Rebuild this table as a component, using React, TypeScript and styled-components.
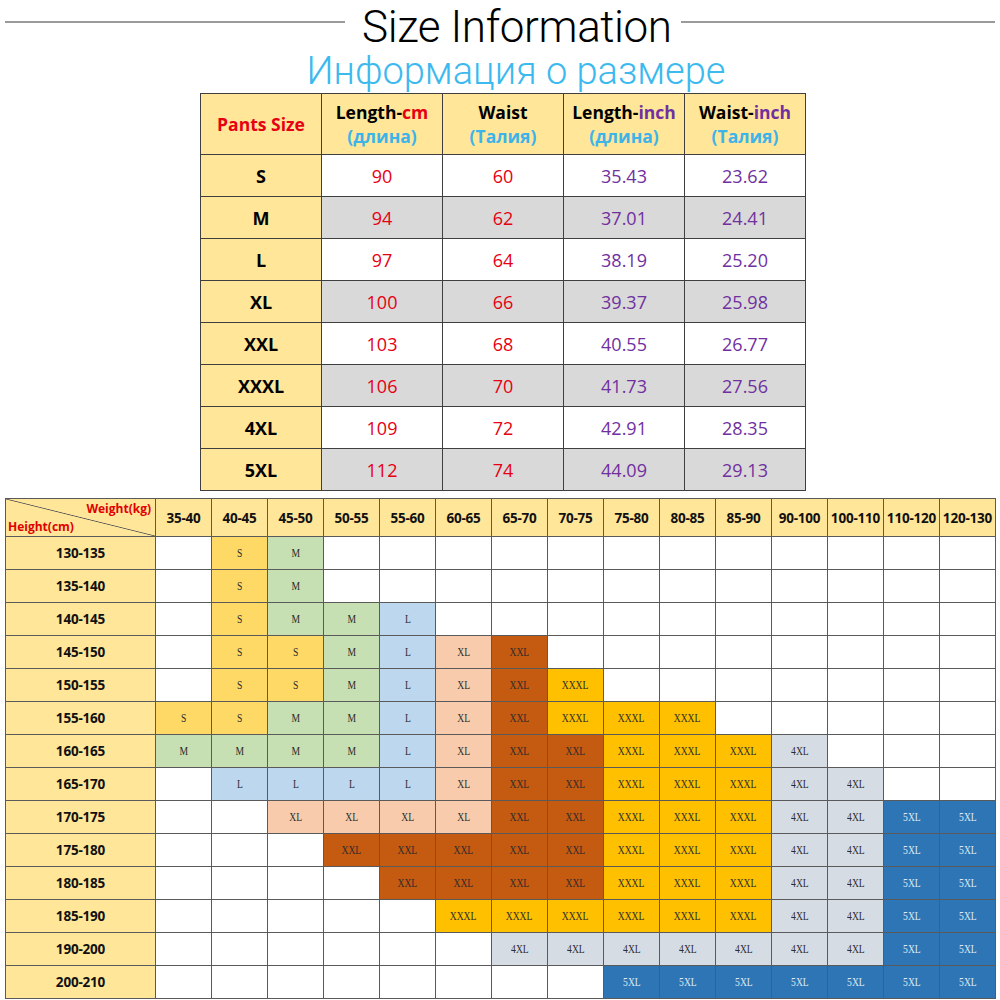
import React from "react";
import styled, { createGlobalStyle } from "styled-components";

const Global = createGlobalStyle`
  html, body { margin: 0; padding: 0; background: #fff; }
  body { font-family: "Open Sans", "Noto Sans", sans-serif; }
`;

const Page = styled.div`
  width: 1000px;
  height: 1000px;
  overflow: hidden;
  background: #fff;
  display: flex;
  flex-direction: column;
`;

const TitleRow = styled.div`
  height: 50px;
  display: flex;
  align-items: flex-start;
  padding: 0 5px;
`;

const Rule = styled.div<{ $fixed?: boolean }>`
  flex: ${(p) => (p.$fixed ? "0 0 340px" : "1")};
  height: 2px;
  margin-top: 21px;
  background: #9a9a9a;
`;

const Title = styled.h1`
  margin: 0 9px 0 17px;
  padding-top: 4px;
  font-family: Roboto, "Open Sans", sans-serif;
  font-weight: 300;
  font-size: 44px;
  line-height: 46px;
  color: #000;
  letter-spacing: -0.4px;
  white-space: nowrap;
`;

const Subtitle = styled.h2`
  margin: 0;
  height: 43px;
  text-align: center;
  font-family: Roboto, "Open Sans", sans-serif;
  font-weight: 300;
  font-size: 38px;
  line-height: 42px;
  color: #3cb9ef;
  padding-left: 32px;
  white-space: nowrap;
`;

const TopWrap = styled.div`
  padding-left: 200px;
`;

const TopGrid = styled.div`
  display: grid;
  width: max-content;
  grid-template-columns: repeat(5, 120px);
  grid-template-rows: 60px repeat(8, 41px);
  gap: 1px;
  padding: 1px;
  background: #3f3f3f;
`;

const TopCell = styled.div<{ $bg: string }>`
  background: ${(p) => p.$bg};
  display: flex;
  flex-direction: column;
  align-items: center;
  justify-content: center;
  font-size: 18px;
  line-height: 24px;
`;

const Head = styled.span<{ $color?: string }>`
  font-weight: 700;
  font-size: 17.5px;
  color: ${(p) => p.$color || "#000"};
`;

const Accent = styled.span<{ $color: string }>`
  color: ${(p) => p.$color};
`;

const SizeText = styled.span`
  font-weight: 700;
  font-size: 18px;
  color: #000;
`;

const Num = styled.span<{ $color: string }>`
  font-size: 18px;
  color: ${(p) => p.$color};
`;

const BottomWrap = styled.div`
  padding-left: 5px;
  margin-top: 7px;
`;

const ChartGrid = styled.div`
  display: grid;
  width: max-content;
  grid-template-columns: 149px repeat(15, 55px);
  grid-template-rows: 37px repeat(14, 32px);
  gap: 1px;
  padding: 1px;
  background: #5a5a5a;
`;

const HeadCell = styled.div`
  background: #ffe699;
  display: flex;
  align-items: center;
  justify-content: center;
  font-weight: 700;
  font-size: 13.5px;
  color: #111;
  white-space: nowrap;
  letter-spacing: -0.2px;
`;

const Corner = styled.div`
  position: relative;
  background: linear-gradient(
      to top right,
      transparent calc(50% - 0.8px),
      #555 50%,
      transparent calc(50% + 0.8px)
    ),
    #ffe699;
  font-weight: 700;
  font-size: 12px;
  color: #e00000;
`;

const CornerTop = styled.span`
  position: absolute;
  right: 4px;
  top: 1px;
`;

const CornerBottom = styled.span`
  position: absolute;
  left: 2px;
  bottom: 1px;
`;

const SIZE_BG: Record<string, string> = {
  S: "#ffd966",
  M: "#c6e0b4",
  L: "#bdd7ee",
  XL: "#f8cbad",
  XXL: "#c55a11",
  XXXL: "#ffc000",
  "4XL": "#d6dce4",
  "5XL": "#2e75b6",
};

const SizeCell = styled.div<{ $size: string }>`
  background: ${(p) => (p.$size ? SIZE_BG[p.$size] : "#fff")};
  display: flex;
  align-items: center;
  justify-content: center;
`;

const CellLabel = styled.span<{ $light: boolean }>`
  display: inline-block;
  font-family: "Liberation Serif", "DejaVu Serif", serif;
  font-size: 13px;
  transform: scaleX(0.74);
  color: ${(p) => (p.$light ? "#ddebf7" : "#2b2b2b")};
`;

const topRows = [
  ["S", "90", "60", "35.43", "23.62"],
  ["M", "94", "62", "37.01", "24.41"],
  ["L", "97", "64", "38.19", "25.20"],
  ["XL", "100", "66", "39.37", "25.98"],
  ["XXL", "103", "68", "40.55", "26.77"],
  ["XXXL", "106", "70", "41.73", "27.56"],
  ["4XL", "109", "72", "42.91", "28.35"],
  ["5XL", "112", "74", "44.09", "29.13"],
];

const weights = [
  "35-40", "40-45", "45-50", "50-55", "55-60", "60-65", "65-70", "70-75",
  "75-80", "80-85", "85-90", "90-100", "100-110", "110-120", "120-130",
];

const heights = [
  "130-135", "135-140", "140-145", "145-150", "150-155", "155-160", "160-165",
  "165-170", "170-175", "175-180", "180-185", "185-190", "190-200", "200-210",
];

const rep = (s: string, n: number) => Array.from({ length: n }, () => s);

const chart: [number, string[]][] = [
  [1, ["S", "M"]],
  [1, ["S", "M"]],
  [1, ["S", "M", "M", "L"]],
  [1, ["S", "S", "M", "L", "XL", "XXL"]],
  [1, ["S", "S", "M", "L", "XL", "XXL", "XXXL"]],
  [0, ["S", "S", "M", "M", "L", "XL", "XXL", "XXXL", "XXXL", "XXXL"]],
  [0, ["M", "M", "M", "M", "L", "XL", "XXL", "XXL", "XXXL", "XXXL", "XXXL", "4XL"]],
  [1, ["L", "L", "L", "L", "XL", "XXL", "XXL", "XXXL", "XXXL", "XXXL", "4XL", "4XL"]],
  [2, ["XL", "XL", "XL", "XL", "XXL", "XXL", "XXXL", "XXXL", "XXXL", "4XL", "4XL", "5XL", "5XL"]],
  [3, [...rep("XXL", 5), ...rep("XXXL", 3), ...rep("4XL", 2), ...rep("5XL", 2)]],
  [4, [...rep("XXL", 4), ...rep("XXXL", 3), ...rep("4XL", 2), ...rep("5XL", 2)]],
  [5, [...rep("XXXL", 6), ...rep("4XL", 2), ...rep("5XL", 2)]],
  [6, [...rep("4XL", 7), ...rep("5XL", 2)]],
  [8, rep("5XL", 7)],
];

const RED = "#e60012";
const BLUE = "#3cb4ea";
const PURPLE = "#7030a0";

export default function App() {
  return (
    <Page>
      <Global />
      <TitleRow>
        <Rule $fixed />
        <Title>Size Information</Title>
        <Rule />
      </TitleRow>
      <Subtitle>Информация о размере</Subtitle>

      <TopWrap>
        <TopGrid>
          <TopCell $bg="#ffe699">
            <Head $color={RED}>Pants Size</Head>
          </TopCell>
          <TopCell $bg="#ffe699">
            <Head>
              Length-<Accent $color={RED}>cm</Accent>
            </Head>
            <Head $color={BLUE}>(длина)</Head>
          </TopCell>
          <TopCell $bg="#ffe699">
            <Head>Waist</Head>
            <Head $color={BLUE}>(Талия)</Head>
          </TopCell>
          <TopCell $bg="#ffe699">
            <Head>
              Length-<Accent $color={PURPLE}>inch</Accent>
            </Head>
            <Head $color={BLUE}>(длина)</Head>
          </TopCell>
          <TopCell $bg="#ffe699">
            <Head>
              Waist-<Accent $color={PURPLE}>inch</Accent>
            </Head>
            <Head $color={BLUE}>(Талия)</Head>
          </TopCell>
          {topRows.map((r, i) => {
            const bg = i % 2 === 1 ? "#d9d9d9" : "#ffffff";
            return (
              <React.Fragment key={r[0]}>
                <TopCell $bg="#ffe699">
                  <SizeText>{r[0]}</SizeText>
                </TopCell>
                <TopCell $bg={bg}>
                  <Num $color={RED}>{r[1]}</Num>
                </TopCell>
                <TopCell $bg={bg}>
                  <Num $color={RED}>{r[2]}</Num>
                </TopCell>
                <TopCell $bg={bg}>
                  <Num $color={PURPLE}>{r[3]}</Num>
                </TopCell>
                <TopCell $bg={bg}>
                  <Num $color={PURPLE}>{r[4]}</Num>
                </TopCell>
              </React.Fragment>
            );
          })}
        </TopGrid>
      </TopWrap>

      <BottomWrap>
        <ChartGrid>
          <Corner>
            <CornerTop>Weight(kg)</CornerTop>
            <CornerBottom>Height(cm)</CornerBottom>
          </Corner>
          {weights.map((w) => (
            <HeadCell key={w}>{w}</HeadCell>
          ))}
          {heights.map((h, ri) => {
            const [start, sizes] = chart[ri];
            return (
              <React.Fragment key={h}>
                <HeadCell>{h}</HeadCell>
                {weights.map((w, ci) => {
                  const s = ci >= start && ci < start + sizes.length ? sizes[ci - start] : "";
                  return (
                    <SizeCell key={w} $size={s}>
                      {s && <CellLabel $light={s === "5XL"}>{s}</CellLabel>}
                    </SizeCell>
                  );
                })}
              </React.Fragment>
            );
          })}
        </ChartGrid>
      </BottomWrap>
    </Page>
  );
}
